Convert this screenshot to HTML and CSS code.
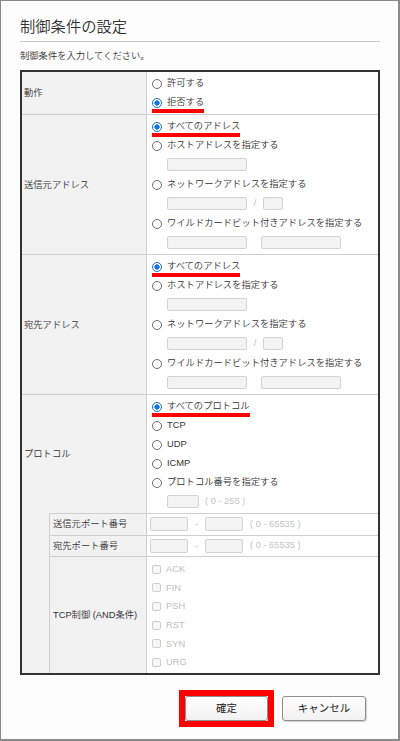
FILE: index.html
```html
<!DOCTYPE html>
<html lang="ja">
<head>
<meta charset="utf-8">
<title>制御条件の設定</title>
<link rel="stylesheet" href="styles.css">
</head>
<body>
<div class="frame">
  <h1 class="title">制御条件の設定</h1>
  <p class="lead">制御条件を入力してください。</p>

  <div class="form">
    <div class="lab wide first">動作</div>
    <div class="val first">
      <div class="opt"><span class="radio"></span>許可する</div>
      <div class="opt mark"><span class="radio on"></span>拒否する</div>
    </div>

    <div class="lab wide">送信元アドレス</div>
    <div class="val">
      <div class="opt mark"><span class="radio on"></span>すべてのアドレス</div>
      <div class="opt"><span class="radio"></span>ホストアドレスを指定する</div>
      <div class="inrow"><span class="box w80"></span></div>
      <div class="opt"><span class="radio"></span>ネットワークアドレスを指定する</div>
      <div class="inrow"><span class="box w80"></span><span class="sep">/</span><span class="box w20"></span></div>
      <div class="opt"><span class="radio"></span>ワイルドカードビット付きアドレスを指定する</div>
      <div class="inrow last"><span class="box w80"></span><span class="box w80 gapl"></span></div>
    </div>

    <div class="lab wide">宛先アドレス</div>
    <div class="val">
      <div class="opt mark"><span class="radio on"></span>すべてのアドレス</div>
      <div class="opt"><span class="radio"></span>ホストアドレスを指定する</div>
      <div class="inrow"><span class="box w80"></span></div>
      <div class="opt"><span class="radio"></span>ネットワークアドレスを指定する</div>
      <div class="inrow"><span class="box w80"></span><span class="sep">/</span><span class="box w20"></span></div>
      <div class="opt"><span class="radio"></span>ワイルドカードビット付きアドレスを指定する</div>
      <div class="inrow last"><span class="box w80"></span><span class="box w80 gapl"></span></div>
    </div>

    <div class="lab wide proto">プロトコル</div>
    <div class="val">
      <div class="opt mark"><span class="radio on"></span>すべてのプロトコル</div>
      <div class="opt"><span class="radio"></span>TCP</div>
      <div class="opt"><span class="radio"></span>UDP</div>
      <div class="opt"><span class="radio"></span>ICMP</div>
      <div class="opt"><span class="radio"></span>プロトコル番号を指定する</div>
      <div class="inrow last"><span class="box w32"></span><span class="range">( 0 - 255 )</span></div>
    </div>

    <div class="stub"></div>
    <div class="lab sub">送信元ポート番号</div>
    <div class="val port">
      <span class="box w38"></span><span class="dash">-</span><span class="box w38"></span><span class="range">( 0 - 65535 )</span>
    </div>

    <div class="lab sub">宛先ポート番号</div>
    <div class="val port">
      <span class="box w38"></span><span class="dash">-</span><span class="box w38"></span><span class="range">( 0 - 65535 )</span>
    </div>

    <div class="lab sub">TCP制御 (AND条件)</div>
    <div class="val tcp">
      <div class="chkrow"><span class="chk"></span>ACK</div>
      <div class="chkrow"><span class="chk"></span>FIN</div>
      <div class="chkrow"><span class="chk"></span>PSH</div>
      <div class="chkrow"><span class="chk"></span>RST</div>
      <div class="chkrow"><span class="chk"></span>SYN</div>
      <div class="chkrow"><span class="chk"></span>URG</div>
    </div>
  </div>

  <div class="actions">
    <button class="btn primary" type="button">確定</button>
    <button class="btn" type="button">キャンセル</button>
  </div>
</div>
</body>
</html>
```

FILE: styles.css
```css
* { box-sizing: border-box; }

html, body {
  margin: 0;
  padding: 0;
  background: #ffffff;
}

body {
  font-family: "Liberation Sans", "Noto Sans CJK JP", sans-serif;
  font-size: 9.3px;
  font-weight: 350;
  color: #333333;
}

.frame {
  width: 400px;
  height: 741px;
  border: 1px solid #8a8a8a;
  border-right-width: 2px;
  border-bottom-width: 2px;
  padding: 15.5px 18px 0 19px;
  background: #fdfdfd;
}

.title {
  margin: 0;
  font-size: 15.3px;
  font-weight: 350;
  line-height: 20px;
  color: #333333;
  padding-bottom: 4.5px;
  border-bottom: 1px solid #c8c8c8;
}

.lead {
  margin: 5px 0 4px;
  line-height: 19px;
  font-size: 9.3px;
}

/* ---------- form grid ---------- */
.form {
  display: grid;
  grid-template-columns: 28px 97px 1fr;
  border: 2px solid #333333;
  background: #ffffff;
}

.lab {
  display: flex;
  align-items: center;
  background: #f2f2f2;
  border-top: 1px solid #cfcfcf;
  border-right: 1px solid #cfcfcf;
  line-height: 14px;
}

.lab.wide {
  grid-column: 1 / 3;
  padding-left: 2px;
}

.lab.sub {
  grid-column: 2 / 3;
  padding-left: 3px;
}

.stub {
  grid-column: 1 / 2;
  grid-row: span 3;
  background: #f2f2f2;
  border-right: 1px solid #cfcfcf;
}

.val {
  grid-column: 3 / 4;
  border-top: 1px solid #cfcfcf;
  padding: 2px 0 2px 5px;
  background: #ffffff;
}

.first { border-top: none; }

.opt {
  position: relative;
  display: flex;
  align-items: center;
  gap: 5px;
  height: 19px;
  width: fit-content;
  line-height: 19px;
  color: #333333;
}

.mark::after {
  content: "";
  position: absolute;
  left: 0;
  right: 0;
  bottom: -0.5px;
  height: 4px;
  background: #ff0000;
}

.radio {
  width: 10px;
  height: 10px;
  border: 1px solid #6b6b6b;
  border-radius: 50%;
  background: #ffffff;
  flex: none;
}

.radio.on {
  border-color: #1a6fd8;
  background: radial-gradient(circle, #1673e6 0 2.4px, #ffffff 2.9px);
}

.inrow {
  display: flex;
  align-items: center;
  padding: 3px 0 4px 15px;
}

.inrow.last { padding-bottom: 3px; }

.box {
  display: block;
  height: 13px;
  border: 1px solid #d3d3d3;
  border-radius: 2px;
  background: #f3f3f3;
  flex: none;
}

.w80 { width: 80px; }
.w20 { width: 20px; }
.w32 { width: 32px; }
.w38 { width: 38px; height: 14px; }
.gapl { margin-left: 14px; }

.sep {
  width: 16px;
  text-align: center;
  color: #bdbdbd;
  line-height: 13px;
}

.range {
  margin-left: 6px;
  color: #c4c4c4;
  line-height: 13px;
}

.val.port {
  display: flex;
  align-items: center;
  padding: 3px 0 3.5px 3px;
}

.val.port .range { margin-left: 7px; }

.dash {
  width: 17px;
  text-align: center;
  color: #c4c4c4;
  line-height: 14px;
}

.val.tcp {
  padding: 3px 0 1.5px 5px;
}

.chkrow {
  display: flex;
  align-items: center;
  gap: 5px;
  height: 18.6px;
  color: #c0c0c0;
  line-height: 18px;
}

.chk {
  width: 9px;
  height: 9px;
  border: 1px solid #cfcfcf;
  border-radius: 2px;
  background: #f6f6f6;
  flex: none;
}

/* ---------- buttons ---------- */
.actions {
  display: flex;
  justify-content: flex-end;
  gap: 14px;
  margin-top: 21px;
  padding-right: 14px;
}

.btn {
  position: relative;
  width: 84px;
  height: 25px;
  padding: 0;
  border: 1px solid #8e8e8e;
  border-radius: 3px;
  background: linear-gradient(#ffffff, #f1f1f1);
  box-shadow: 1px 1px 1px rgba(0, 0, 0, 0.18);
  font-family: "Liberation Sans", "Noto Sans CJK JP", sans-serif;
  font-size: 10.5px;
  font-weight: 400;
  color: #222222;
  line-height: 23px;
}

.btn.primary {
  width: 83px;
}

.btn.primary::before {
  content: "";
  position: absolute;
  left: -7px;
  top: -7px;
  right: -7px;
  bottom: -7px;
  border: 6px solid #ff0000;
}
```
